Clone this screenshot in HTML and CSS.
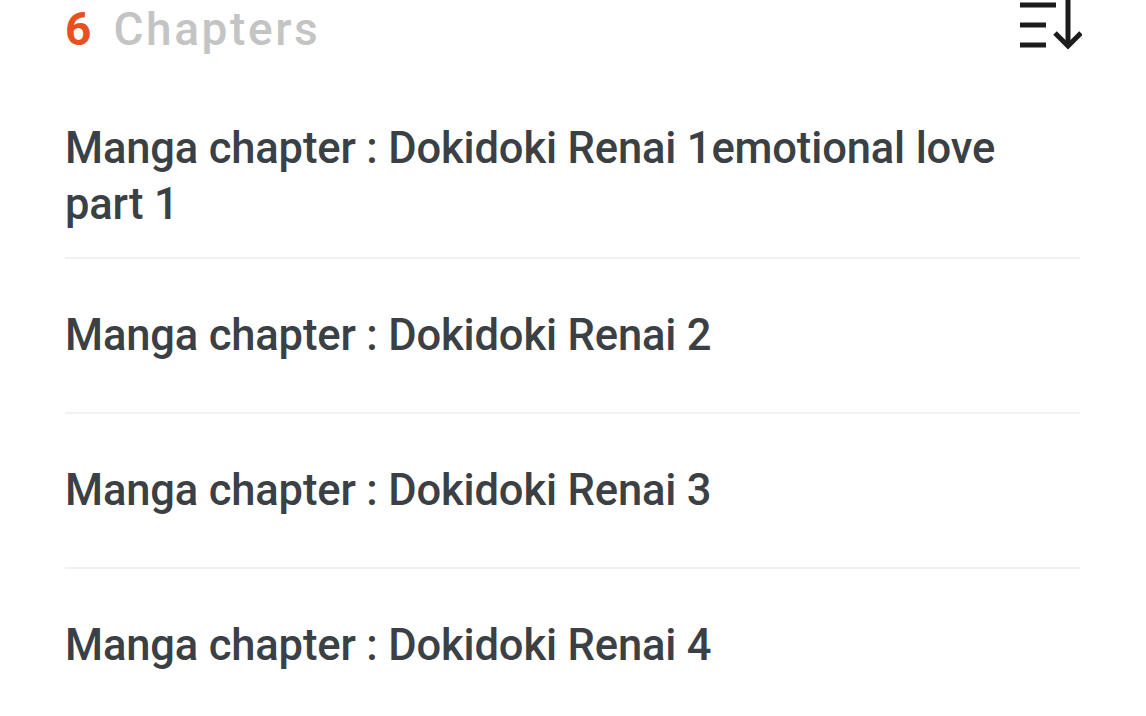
FILE: index.html
```html
<!DOCTYPE html>
<html lang="en">
<head>
<meta charset="utf-8">
<title>Chapters</title>
<link rel="stylesheet" href="styles.css">
</head>
<body>
<div class="page">
  <header class="head">
    <h2 class="title"><span class="count">6</span><span class="label">Chapters</span></h2>
    <button class="sort" aria-label="Sort">
      <svg width="64" height="52" viewBox="0 0 64 52" fill="none" stroke="#1c1c1c" stroke-width="5">
        <line x1="2" y1="5" x2="38" y2="5"/>
        <line x1="2" y1="25" x2="28" y2="25"/>
        <line x1="2" y1="45" x2="28" y2="45"/>
        <line x1="50" y1="0" x2="50" y2="47"/>
        <polyline points="37,33 50,46 63,33" stroke-linejoin="miter"/>
      </svg>
    </button>
  </header>
  <ul class="list">
    <li class="item">Manga chapter : Dokidoki Renai 1emotional love part 1</li>
    <li class="item">Manga chapter : Dokidoki Renai 2</li>
    <li class="item">Manga chapter : Dokidoki Renai 3</li>
    <li class="item">Manga chapter : Dokidoki Renai 4</li>
  </ul>
</div>
</body>
</html>
```
FILE: styles.css
```css
html, body {
  margin: 0;
  padding: 0;
  background: #ffffff;
}
body {
  font-family: Roboto, "Noto Sans", sans-serif;
  overflow: hidden;
}
.page {
  width: 1015px;
  padding: 0 66px 0 65px;
}
.head {
  height: 97px;
  display: flex;
  justify-content: space-between;
  align-items: flex-start;
}
.title {
  margin: 6px 0 0;
  font-size: 46px;
  line-height: 46px;
  font-weight: 500;
  display: flex;
}
.count {
  color: #e8501f;
  font-weight: 700;
  margin-right: 20px;
  letter-spacing: 2px;
}
.label {
  color: #c4c4c4;
  letter-spacing: 2.6px;
}
.sort {
  border: 0;
  padding: 0;
  background: none;
  display: block;
  width: 64px;
  height: 52px;
  margin-right: -2px;
}
.sort svg {
  display: block;
}
.list {
  list-style: none;
  margin: 0;
  padding: 0;
}
.item {
  min-height: 105px;
  padding: 24px 0;
  display: flex;
  align-items: center;
  border-bottom: 2px solid #f1f1f1;
  font-size: 43.5px;
  line-height: 56px;
  font-weight: 500;
  letter-spacing: -0.15px;
  color: #3b4045;
}
```
